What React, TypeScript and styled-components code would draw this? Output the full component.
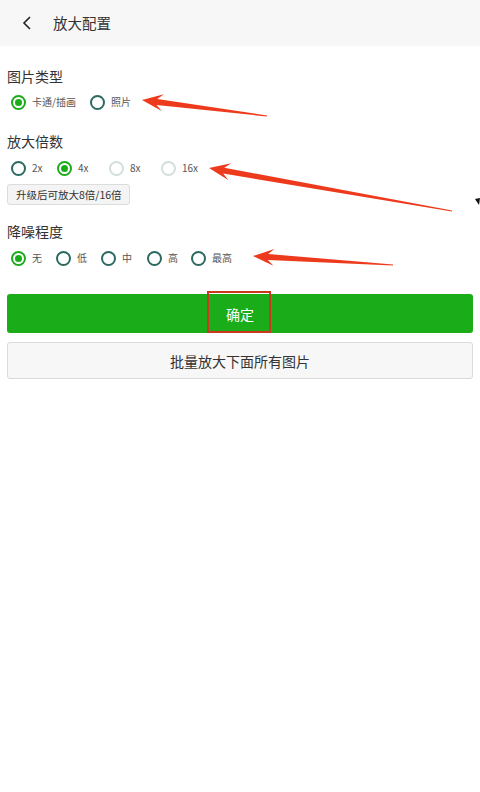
import React from "react";
import styled, { createGlobalStyle } from "styled-components";

const Global = createGlobalStyle`
  html, body { margin: 0; padding: 0; background: #ffffff; }
  body { font-family: "Noto Sans CJK SC", "Noto Sans", sans-serif; }
  * { box-sizing: border-box; }
`;

const GREEN = "#1aad19";

const Page = styled.div`
  position: relative;
  width: 480px;
  height: 792px;
  background: #fff;
  overflow: hidden;
`;

const Header = styled.div`
  height: 46px;
  background: #f7f7f7;
  display: flex;
  align-items: center;
  padding-left: 22px;
`;

const BackIcon = styled.svg`
  width: 12px;
  height: 14px;
  margin-right: 19px;
`;

const HeaderTitle = styled.div`
  font-size: 14.5px;
  color: #333;
  line-height: 20px;
`;

const Content = styled.div`
  display: flex;
  flex-direction: column;
  padding: 0 7px;
`;

const SectionTitle = styled.div<{ $mt: number }>`
  margin-top: ${(p) => p.$mt}px;
  font-size: 14px;
  line-height: 20px;
  color: #333;
`;

const RadioRow = styled.div<{ $mt: number }>`
  margin-top: ${(p) => p.$mt}px;
  display: flex;
  align-items: center;
  height: 16px;
  padding-left: 4px;
`;

const RadioItem = styled.div<{ $w?: number }>`
  display: flex;
  align-items: center;
  ${(p) => (p.$w ? `width: ${p.$w}px;` : "margin-right: 14px;")}
`;

const Circle = styled.span<{ $state: "on" | "off" | "disabled" }>`
  width: 15px;
  height: 15px;
  border-radius: 50%;
  border: 2px solid
    ${(p) => (p.$state === "on" ? GREEN : p.$state === "off" ? "#2c6a61" : "#d3dfdc")};
  display: flex;
  align-items: center;
  justify-content: center;
  flex-shrink: 0;
`;

const Dot = styled.span`
  width: 7px;
  height: 7px;
  border-radius: 50%;
  background: ${GREEN};
`;

const RadioLabel = styled.span`
  margin-left: 6px;
  font-size: 10px;
  line-height: 14px;
  color: #555;
  white-space: nowrap;
`;

const UpgradeButton = styled.div`
  margin-top: 8px;
  align-self: flex-start;
  height: 21px;
  padding: 0 7px 0 8px;
  display: flex;
  align-items: center;
  font-size: 10.5px;
  color: #333;
  background: #f4f4f4;
  border: 1px solid #dcdcdc;
  border-radius: 3px;
  white-space: nowrap;
`;

const PrimaryButton = styled.div`
  position: relative;
  margin-top: 28px;
  height: 39px;
  border-radius: 3px;
  background: ${GREEN};
  color: #fff;
  font-size: 14px;
  display: flex;
  align-items: center;
  justify-content: center;
`;

const Highlight = styled.span`
  position: absolute;
  left: 50%;
  top: -3px;
  width: 64px;
  height: 42px;
  margin-left: -33px;
  border: 2px solid #c9381f;
`;

const SecondaryButton = styled.div`
  margin-top: 9px;
  height: 37px;
  border-radius: 3px;
  background: #f7f7f7;
  border: 1px solid #dadada;
  color: #333;
  font-size: 14px;
  display: flex;
  align-items: center;
  justify-content: center;
`;

const Overlay = styled.svg`
  position: absolute;
  left: 0;
  top: 0;
  width: 480px;
  height: 792px;
  pointer-events: none;
`;

type Opt = { label: string; state: "on" | "off" | "disabled"; w?: number };

function Radio({ label, state, w }: Opt) {
  return (
    <RadioItem $w={w}>
      <Circle $state={state}>{state === "on" && <Dot />}</Circle>
      <RadioLabel>{label}</RadioLabel>
    </RadioItem>
  );
}

function arrowPoints(tip: [number, number], tail: [number, number]) {
  const dx = tip[0] - tail[0];
  const dy = tip[1] - tail[1];
  const len = Math.hypot(dx, dy);
  const d = [dx / len, dy / len];
  const n = [-d[1], d[0]];
  const L = 21;
  const H = 8.5;
  const notch = 15;
  const sw = 3;
  const tw = 0.5;
  const p = (base: [number, number], along: number, side: number) =>
    `${(base[0] - d[0] * along + n[0] * side).toFixed(1)},${(base[1] - d[1] * along + n[1] * side).toFixed(1)}`;
  return [
    `${tip[0]},${tip[1]}`,
    p(tip, L, H),
    p(tip, notch, sw),
    p(tail, 0, tw),
    p(tail, 0, -tw),
    p(tip, notch, -sw),
    p(tip, L, -H),
  ].join(" ");
}

export default function App() {
  return (
    <Page>
      <Global />
      <Header>
        <BackIcon viewBox="0 0 12 14">
          <polyline points="8,1 2,7 8,13" fill="none" stroke="#222" strokeWidth="1.6" />
        </BackIcon>
        <HeaderTitle>放大配置</HeaderTitle>
      </Header>
      <Content>
        <SectionTitle $mt={20}>图片类型</SectionTitle>
        <RadioRow $mt={8}>
          <Radio label="卡通/插画" state="on" />
          <Radio label="照片" state="off" />
        </RadioRow>

        <SectionTitle $mt={21}>放大倍数</SectionTitle>
        <RadioRow $mt={9}>
          <Radio label="2x" state="off" w={46} />
          <Radio label="4x" state="on" w={52} />
          <Radio label="8x" state="disabled" w={52} />
          <Radio label="16x" state="disabled" />
        </RadioRow>
        <UpgradeButton>升级后可放大8倍/16倍</UpgradeButton>

        <SectionTitle $mt={16}>降噪程度</SectionTitle>
        <RadioRow $mt={9}>
          <Radio label="无" state="on" w={45} />
          <Radio label="低" state="off" w={45} />
          <Radio label="中" state="off" w={46} />
          <Radio label="高" state="off" w={44} />
          <Radio label="最高" state="off" />
        </RadioRow>

        <PrimaryButton>
          确定
          <Highlight />
        </PrimaryButton>
        <SecondaryButton>批量放大下面所有图片</SecondaryButton>
      </Content>

      <Overlay viewBox="0 0 480 792">
        <polygon points={arrowPoints([142, 100], [267, 116])} fill="#ee3a1c" />
        <polygon points={arrowPoints([209, 168], [452, 211])} fill="#ee3a1c" />
        <polygon points={arrowPoints([253, 256], [393, 265])} fill="#ee3a1c" />
        <polygon points="475,199 480,198 479,205" fill="#111" />
      </Overlay>
    </Page>
  );
}
